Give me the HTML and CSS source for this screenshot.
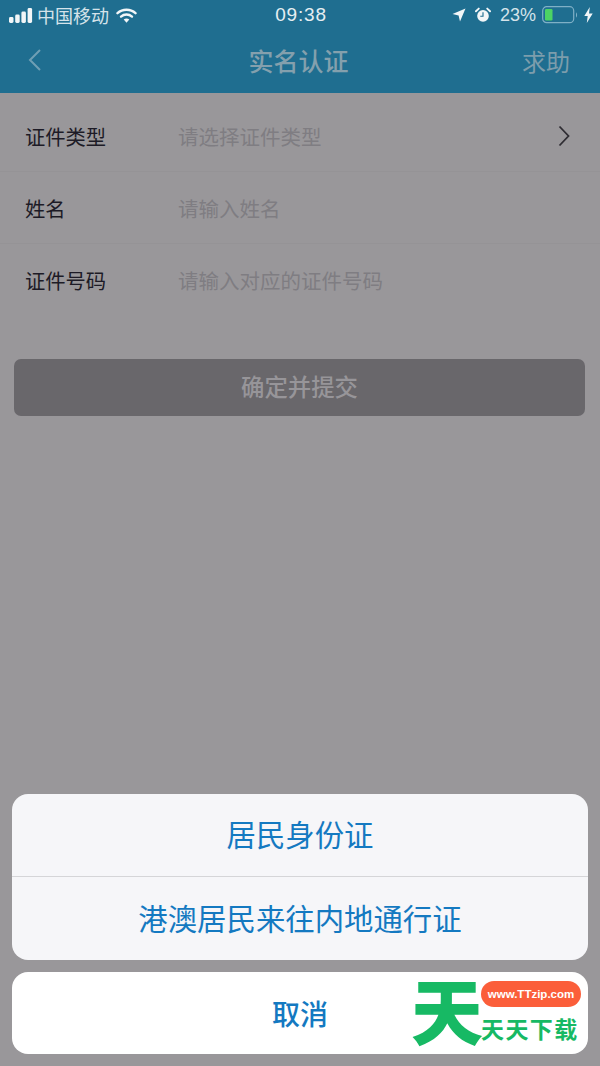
FILE: index.html
```html
<!DOCTYPE html>
<html lang="zh-CN">
    <head>
        <meta charset="UTF-8">
        <meta name="viewport" content="width=device-width, initial-scale=1.0">
        <title>实名认证</title>
        <link rel="stylesheet" href="styles.css">
    </head>
    <body>
        <div class="page">
            <header class="top-bar">
                <div class="status-bar">
                    <div class="status-left">
                        <svg class="signal" width="24" height="15" viewBox="0 0 24 15">
                            <rect x="0" y="9" width="4.5" height="6" rx="1.4" fill="#f2f6f8"/>
                            <rect x="6.2" y="6.5" width="4.5" height="8.5" rx="1.4" fill="#f2f6f8"/>
                            <rect x="12.4" y="3.5" width="4.5" height="11.5" rx="1.4" fill="#f2f6f8"/>
                            <rect x="18.6" y="0" width="4.5" height="15" rx="1.4" fill="#f2f6f8"/>
                        </svg>
                        <span class="carrier">中国移动</span>
                        <svg class="wifi" width="21" height="15" viewBox="0 0 21 15">
                            <path d="M1.5 5.2C6.6.6 14.4.6 19.5 5.2" fill="none" stroke="#f2f6f8" stroke-width="2.4" stroke-linecap="round"/>
                            <path d="M5 8.6c3.2-2.8 7.8-2.8 11 0" fill="none" stroke="#f2f6f8" stroke-width="2.4" stroke-linecap="round"/>
                            <path d="M10.5 14.8 7.7 11.6c1.6-1.4 4-1.4 5.6 0z" fill="#f2f6f8"/>
                        </svg>
                    </div>
                    <span class="clock">09:38</span>
                    <div class="status-right">
                        <svg width="14" height="14" viewBox="0 0 14 14">
                            <path d="M13.5.5 8 13.5 6.6 7.4.5 6z" fill="#f2f6f8"/>
                        </svg>
                        <svg class="alarm" width="16" height="16" viewBox="0 0 17 16">
                            <circle cx="8.5" cy="9" r="6.2" fill="#f2f6f8"/>
                            <path d="M8.5 5v4.3H5.6" fill="none" stroke="#1f6e90" stroke-width="1.2"/>
                            <path d="M1 4 4 1.2M16 4 13 1.2" stroke="#f2f6f8" stroke-width="2" stroke-linecap="round"/>
                        </svg>
                        <span class="battery-text">23%</span>
                        <svg width="36" height="18" viewBox="0 0 36 18">
                            <rect x="0.7" y="0.7" width="31" height="16" rx="4" fill="none" stroke="#7fb0c6" stroke-width="1.2"/>
                            <rect x="3" y="3" width="7.5" height="11.5" rx="1.2" fill="#4cd364"/>
                            <path d="M34 6.5c1.4.5 1.4 4.5 0 5z" fill="#7fb0c6"/>
                        </svg>
                        <svg width="9" height="16" viewBox="0 0 9 16">
                            <path d="M5.8 0 .3 9h3.4L2.8 16l5.9-9.6H5z" fill="#f2f6f8"/>
                        </svg>
                    </div>
                </div>
                <nav class="nav-bar">
                    <svg class="back-icon" width="15" height="24" viewBox="0 0 15 24">
                        <path d="M13 2 3 12l10 10" fill="none" stroke="#6f9fb4" stroke-width="2"/>
                    </svg>
                    <h1 class="nav-title">实名认证</h1>
                    <span class="nav-help">求助</span>
                </nav>
            </header>

            <section class="form">
                <div class="form-row">
                    <span class="form-label">证件类型</span>
                    <span class="form-hint">请选择证件类型</span>
                    <svg class="row-arrow" width="12" height="22" viewBox="0 0 12 22">
                        <path d="M1.5 1.5 10.5 11l-9 9.5" fill="none" stroke="#2f2d33" stroke-width="1.8"/>
                    </svg>
                </div>
                <div class="form-row">
                    <span class="form-label">姓名</span>
                    <span class="form-hint">请输入姓名</span>
                </div>
                <div class="form-row">
                    <span class="form-label">证件号码</span>
                    <span class="form-hint">请输入对应的证件号码</span>
                </div>
            </section>

            <button class="submit-button">确定并提交</button>

            <div class="action-sheet">
                <div class="sheet-group">
                    <div class="sheet-option">居民身份证</div>
                    <div class="sheet-option">港澳居民来往内地通行证</div>
                </div>
                <div class="sheet-group">
                    <div class="sheet-option sheet-cancel">取消</div>
                </div>
            </div>
        </div>

        <div class="watermark">
            <span class="mark-big">天</span>
            <div class="mark-side">
                <span class="mark-url">www.TTzip.com</span>
                <span class="mark-name">天天下载</span>
            </div>
        </div>
    </body>
</html>
```

FILE: styles.css
```css
body {
    margin: 0;
    background-color: #99979a;
    font-family: "Noto Sans CJK SC", "Liberation Sans", sans-serif;
}

.page {
    display: flex;
    flex-direction: column;
    height: 1066px;
    overflow: hidden;
}

.top-bar {
    height: 93px;
    background-color: #1f6e90;
}

.status-bar {
    display: grid;
    grid-template-columns: 1fr auto 1fr;
    align-items: center;
    height: 30px;
    padding: 0 7px 0 9px;
    color: #e6eef2;
}

.status-left,
.status-right {
    display: flex;
    align-items: center;
}

.status-right {
    justify-content: flex-end;
    gap: 6px;
}

.signal {
    margin-right: 4px;
}

.carrier {
    font-size: 18px;
    color: #d5e3ea;
}

.wifi {
    margin-left: 7px;
}

.clock {
    font-family: "Liberation Sans", sans-serif;
    font-size: 19px;
    letter-spacing: 0.8px;
}

.alarm {
    margin: 0 3px;
}

.battery-text {
    font-family: "Liberation Sans", sans-serif;
    font-size: 18px;
    color: #d5e3ea;
}

.nav-bar {
    display: grid;
    grid-template-columns: 1fr auto 1fr;
    align-items: center;
    height: 60px;
    padding: 0 30px 3px 27px;
}

.nav-title {
    margin: 0;
    font-size: 25px;
    font-weight: 500;
    color: #84a0ad;
}

.nav-help {
    justify-self: end;
    font-size: 24px;
    color: #7c9dac;
}

.form {
    padding-top: 7px;
}

.form-row {
    display: flex;
    align-items: center;
    height: 72px;
    padding: 0 30px 0 25px;
    border-bottom: 1px solid #959396;
    box-sizing: border-box;
}

.form-row:last-child {
    border-bottom: none;
}

.form-label {
    width: 153px;
    font-size: 20.3px;
    color: #1d1b26;
}

.form-hint {
    flex: 1;
    font-size: 20.5px;
    color: #7f7d82;
}

.submit-button {
    display: block;
    margin: 43px 15px 0 14px;
    height: 57px;
    padding: 0 0 3px;
    border: none;
    border-radius: 7px;
    background-color: #69676b;
    color: #979599;
    font-family: inherit;
    font-size: 23.4px;
    font-weight: 500;
}

.action-sheet {
    display: flex;
    flex-direction: column;
    gap: 12px;
    margin: auto 12px 12px;
}

.sheet-group {
    background-color: #f6f6f9;
    border-radius: 16px;
    overflow: hidden;
}

.sheet-option {
    height: 82px;
    line-height: 79px;
    text-align: center;
    font-size: 29.4px;
    color: #1479c1;
}

.sheet-option + .sheet-option {
    height: 83px;
    line-height: 80px;
    border-top: 1px solid #d5d5d8;
}

.sheet-cancel {
    line-height: 82px;
    font-size: 28px;
    font-weight: 500;
    background-color: #fff;
}

.watermark {
    position: absolute;
    left: 411px;
    top: 972px;
    display: flex;
    align-items: flex-start;
}

.mark-big {
    width: 72px;
    font-size: 72px;
    line-height: 72px;
    font-weight: 900;
    color: #17b964;
}

.mark-side {
    display: flex;
    flex-direction: column;
    align-items: flex-start;
    margin-left: -2px;
    padding-top: 9px;
}

.mark-url {
    width: 100px;
    height: 26px;
    line-height: 26px;
    border-radius: 13px;
    background-color: #fb5e3a;
    color: #fff;
    font-family: "Liberation Sans", sans-serif;
    font-size: 11.5px;
    font-weight: 700;
    text-align: center;
}

.mark-name {
    margin-top: 7px;
    font-size: 23px;
    line-height: 28px;
    letter-spacing: 1.4px;
    font-weight: 700;
    color: #17b964;
    white-space: nowrap;
}
```
